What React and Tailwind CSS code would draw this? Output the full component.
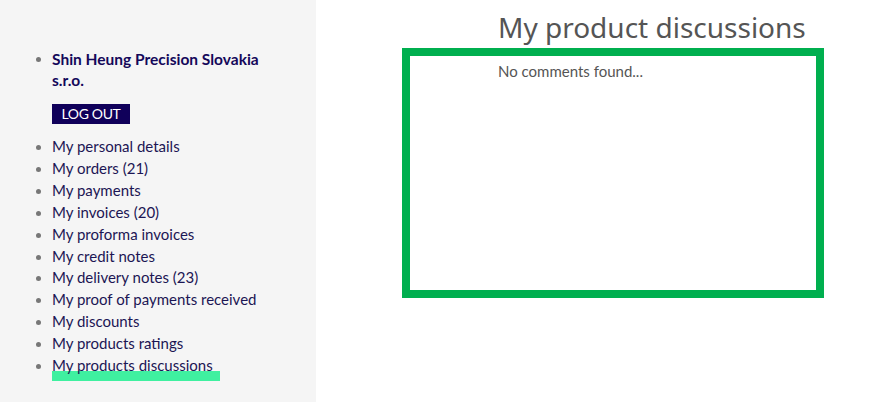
import React from "react";

const links = [
  "My personal details",
  "My orders (21)",
  "My payments",
  "My invoices (20)",
  "My proforma invoices",
  "My credit notes",
  "My delivery notes (23)",
  "My proof of payments received",
  "My discounts",
  "My products ratings",
];

export default function App() {
  return (
    <div
      className="flex h-[402px] w-[879px] overflow-hidden bg-white"
      style={{ fontFamily: "Lato, 'Open Sans', sans-serif" }}
    >
      {/* sidebar */}
      <aside className="w-[316px] shrink-0 bg-[#f5f5f5] pl-[36px] pt-[49px]">
        <ul className="list-none">
          <li className="relative pl-4 text-[15.5px] font-bold leading-[21px] text-[#14085a]">
            <span className="absolute left-0 top-[8px] h-[5px] w-[5px] rounded-full bg-[#777]" />
            Shin Heung Precision Slovakia
            <br />
            s.r.o.
            <div className="mt-[12px]">
              <button className="h-[20px] w-[78px] bg-[#10005a] text-[14px] font-normal leading-[20px] tracking-tight text-white">
                LOG OUT
              </button>
            </div>
          </li>
        </ul>
        <ul className="mt-[12px] list-none">
          {links.map((l) => (
            <li
              key={l}
              className="relative pl-4 text-[15px] leading-[21.9px] text-[#1c1654]"
            >
              <span className="absolute left-0 top-[9px] h-[5px] w-[5px] rounded-full bg-[#777]" />
              {l}
            </li>
          ))}
          <li className="relative pl-4 text-[15px] leading-[21.9px] text-[#1c1654]">
            <span className="absolute left-0 top-[9px] h-[5px] w-[5px] rounded-full bg-[#777]" />
            <span className="relative inline-block">
              <span className="absolute bottom-[-4px] left-0 h-[10px] w-[168px] bg-[#3ff0a0]" />
              <span className="relative">My products discussions</span>
            </span>
          </li>
        </ul>
      </aside>

      {/* main */}
      <main className="flex-1 pl-[86px] pt-[6px]">
        <div className="flex w-[422px] flex-col">
          <h1
            className="ml-[96px] whitespace-nowrap text-[28px] font-normal leading-[42px] text-[#555]"
            style={{ fontFamily: "'Noto Sans', sans-serif" }}
          >
            My product discussions
          </h1>
          <div className="h-[250px] border-[8px] border-[#00af4f]">
            <p className="ml-[88px] mt-[6px] text-[15px] leading-[18px] text-[#555]">
              No comments found...
            </p>
          </div>
        </div>
      </main>
    </div>
  );
}
